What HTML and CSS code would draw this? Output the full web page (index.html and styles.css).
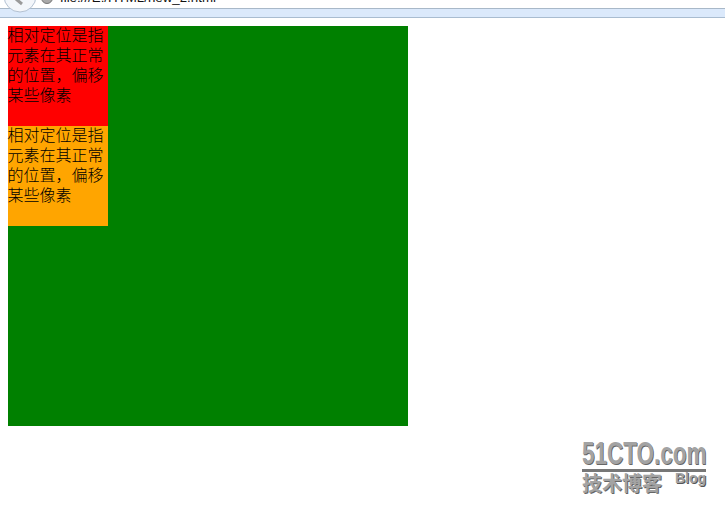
FILE: index.html
```html
<!DOCTYPE html>
<html lang="zh">
<head>
<meta charset="utf-8">
<title>相对定位</title>
<link rel="stylesheet" href="styles.css">
</head>
<body>
<header class="toolbar">
  <svg class="back" width="38" height="13" viewBox="0 0 38 13" aria-hidden="true">
    <circle cx="20" cy="-4" r="16" fill="#f3f6fa" stroke="#b3c1d2"/>
    <path d="M16 -1 L22 4" fill="none" stroke="#9a9a9a" stroke-width="3"/>
  </svg>
  <svg class="globe" width="14" height="5" viewBox="0 0 14 5" aria-hidden="true">
    <circle cx="7" cy="-2" r="5.5" fill="#a9a9a9" stroke="#777"/>
  </svg>
  <span class="url">file:///E:/HTML/new_2.html</span>
</header>
<main class="stage">
  <div class="outer">
    <div class="box red"><p class="box-text">相对定位是指元素在其正常的位置，偏移某些像素</p></div>
    <div class="box orange"><p class="box-text">相对定位是指元素在其正常的位置，偏移某些像素</p></div>
  </div>
</main>
<aside class="mark">
  <div class="mark-top"><span class="mark-logo">51CTO.com</span></div>
  <div class="mark-bottom"><span class="mark-cn">技术博客</span><span class="mark-blog">Blog</span></div>
</aside>
</body>
</html>
```
FILE: styles.css
```css
html, body { margin: 0; padding: 0; }
body {
  width: 725px;
  height: 513px;
  overflow: hidden;
  background: #fff;
  position: relative;
  font-family: "Noto Sans CJK SC", "Liberation Sans", sans-serif;
}
.toolbar {
  height: 17px;
  overflow: hidden;
  display: flex;
  align-items: flex-start;
  border-bottom: 1px solid #a9bcd0;
  background: linear-gradient(#fff 0, #fff 8px, #a8b8c8 8px, #a8b8c8 9px, #dbe9fb 9px, #dbe9fb 100%);
}
.back { flex: none; margin-left: 0; }
.globe { margin-left: 2px; flex: none; }
.url {
  margin-left: 6px;
  margin-top: -9px;
  font: 13.3px/14px "Liberation Sans", sans-serif;
  color: #111;
  white-space: nowrap;
}
.stage { padding: 8px 8px 0; }
.outer { width: 400px; height: 400px; background: #008000; }
.box {
  width: 100px;
  height: 100px;
  display: flow-root;
  font-size: 16px;
  font-weight: 300;
  line-height: 20px;
  color: #000;
}
.box-text { margin: -2px 0 0 -0.4px; }
.red { background: #f00; }
.orange { background: #ffa500; }
.mark {
  position: absolute;
  left: 582px;
  top: 438px;
  width: 124px;
  color: #a3a3a3;
}
.mark-top {
  height: 31px;
  border-bottom: 3px solid #777;
}
.mark-logo {
  display: inline-block;
  font: bold 32px/31px "Liberation Sans", sans-serif;
  transform: scaleX(0.703);
  transform-origin: left center;
  text-shadow: 1px 1px 0 #666;
  white-space: nowrap;
}
.mark-bottom {
  display: flex;
  justify-content: space-between;
  align-items: flex-start;
  margin-top: -1px;
}
.mark-cn {
  font-size: 20px;
  line-height: 24px;
  font-weight: 700;
  color: #a3a3a3;
  text-shadow: 1px 1px 0 #666;
}
.mark-blog {
  font: bold 14px/15px "Liberation Sans", sans-serif;
  text-shadow: 1px 1px 0 #555;
}
```
